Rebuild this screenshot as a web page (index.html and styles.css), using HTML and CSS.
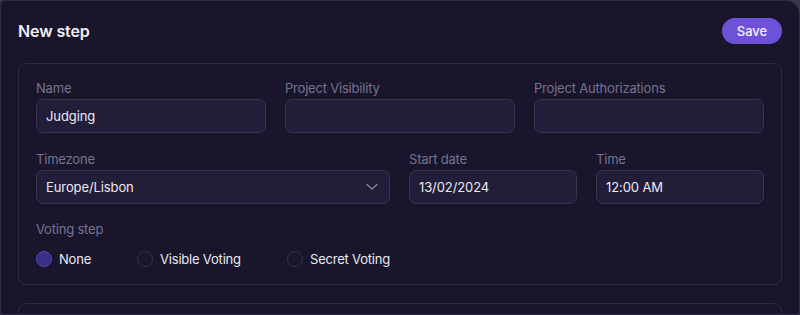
FILE: index.html
```html
<!DOCTYPE html>
<html>
<head>
<meta charset="utf-8">
<link rel="stylesheet" href="styles.css">
</head>
<body>
<div class="card">
  <div class="header">
    <h1 class="title">New step</h1>
    <button class="save">Save</button>
  </div>
  <div class="panel">
    <div class="row row3">
      <div class="field">
        <label class="label">Name</label>
        <div class="input">Judging</div>
      </div>
      <div class="field">
        <label class="label">Project Visibility</label>
        <div class="input"></div>
      </div>
      <div class="field">
        <label class="label">Project Authorizations</label>
        <div class="input"></div>
      </div>
    </div>
    <div class="row row2">
      <div class="field">
        <label class="label">Timezone</label>
        <div class="input select">
          <span>Europe/Lisbon</span>
          <svg class="chev" width="12" height="8" viewBox="0 0 12 8"><path d="M1 1.5 L6 6 L11 1.5" fill="none" stroke="#8a86a0" stroke-width="1.3" stroke-linecap="round" stroke-linejoin="round"/></svg>
        </div>
      </div>
      <div class="field">
        <label class="label">Start date</label>
        <div class="input">13/02/2024</div>
      </div>
      <div class="field">
        <label class="label">Time</label>
        <div class="input">12:00 AM</div>
      </div>
    </div>
    <div class="voting">
      <label class="label">Voting step</label>
      <div class="radios">
        <div class="radio-item r1"><span class="radio checked"></span><span>None</span></div>
        <div class="radio-item r2"><span class="radio"></span><span>Visible Voting</span></div>
        <div class="radio-item"><span class="radio"></span><span>Secret Voting</span></div>
      </div>
    </div>
  </div>
  <div class="panel panel2"></div>
</div>
</body>
</html>
```
FILE: styles.css
```css
* { box-sizing: border-box; }
html, body {
  margin: 0;
  padding: 0;
  background: #3a3947;
  width: 800px;
  height: 315px;
  overflow: hidden;
  font-family: Inter, "Noto Sans", sans-serif;
}
.card {
  background: #19162c;
  border: 1px solid #2f2c45;
  border-radius: 5px 14px 0 0;
  width: 800px;
  height: 315px;
  padding: 0 17px;
  overflow: hidden;
}
.header {
  display: flex;
  justify-content: space-between;
  align-items: center;
  height: 62px;
  padding-bottom: 2px;
}
.title {
  margin: 0;
  font-size: 16px;
  font-weight: 600;
  color: #f1eff7;
  letter-spacing: -0.1px;
}
.save {
  height: 26px;
  width: 60px;
  border: none;
  border-radius: 13px;
  background: #6e51d8;
  color: #f4f1ff;
  font-family: Inter, sans-serif;
  font-size: 13px;
  font-weight: 500;
  padding: 0;
}
.panel {
  border: 1px solid #2e2a44;
  border-radius: 8px;
  padding: 16px 17px 17px;
}
.panel2 {
  margin-top: 18px;
  height: 40px;
}
.row {
  display: grid;
  column-gap: 19px;
  margin-bottom: 18px;
}
.row3 { grid-template-columns: 1fr 1fr 1fr; }
.row2 { grid-template-columns: 354px 168px 168px; margin-bottom: 17px; }
.field { display: flex; flex-direction: column; }
.label {
  font-size: 13px;
  line-height: 16px;
  color: #77728e;
  margin-bottom: 3px;
  letter-spacing: -0.2px;
}
.input {
  height: 34px;
  background: #221e3a;
  border: 1px solid #38344f;
  border-radius: 7px;
  padding: 0 9px;
  display: flex;
  align-items: center;
  font-size: 13px;
  color: #ebe9f3;
  letter-spacing: -0.1px;
}
.select { justify-content: space-between; padding-right: 11px; }
.chev { display: block; }
.voting .label { display: block; margin-bottom: 14px; }
.radios {
  display: flex;
  align-items: center;
  height: 16px;
  font-size: 13px;
  color: #ebe9f3;
  letter-spacing: -0.2px;
}
.radio-item { display: flex; align-items: center; gap: 7px; }
.r1 { width: 101px; }
.r2 { width: 150px; }
.radio {
  width: 16px;
  height: 16px;
  border-radius: 50%;
  border: 1px solid #34304c;
  display: inline-block;
}
.radio.checked {
  background: #3a2f86;
  border: 1.5px solid #5a45c6;
}
```
